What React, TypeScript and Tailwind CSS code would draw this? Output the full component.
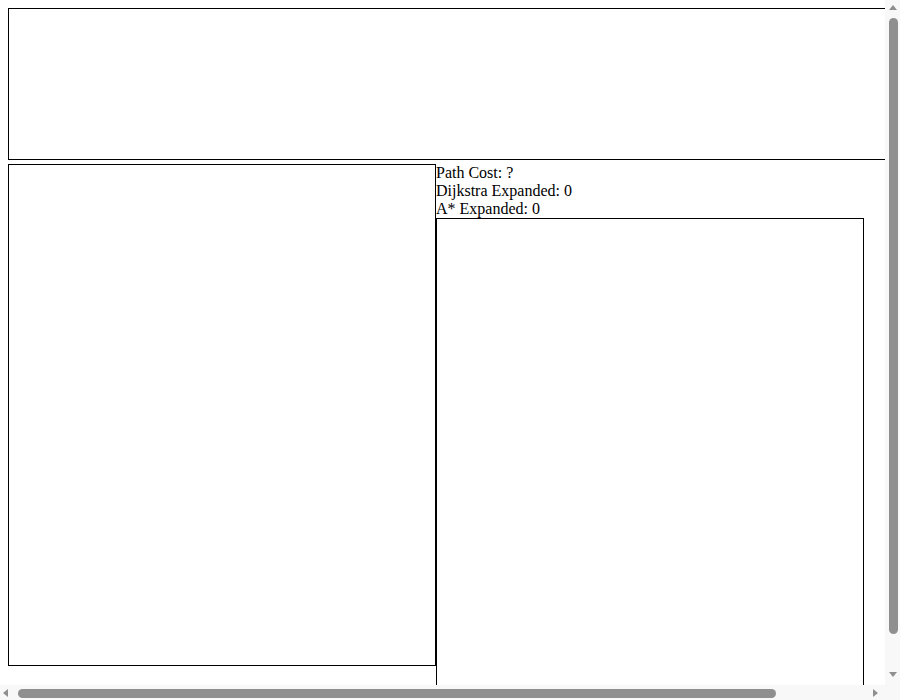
function Arrow({ dir }: { dir: "up" | "down" | "left" | "right" }) {
  const pts: Record<string, string> = {
    up: "0,5 4,0 8,5",
    down: "0,0 8,0 4,5",
    left: "5,0 5,8 0,4",
    right: "0,0 5,4 0,8",
  };
  const vertical = dir === "up" || dir === "down";
  return (
    <svg
      width={vertical ? 8 : 5}
      height={vertical ? 5 : 8}
      viewBox={vertical ? "0 0 8 5" : "0 0 5 8"}
      className="block"
    >
      <polygon points={pts[dir]} fill="#8f8f8f" />
    </svg>
  );
}

export default function App() {
  return (
    <div className="relative w-[900px] h-[700px] overflow-hidden bg-white">
      <div
        className="w-max p-2 pb-3 text-black text-base"
        style={{ fontFamily: '"Liberation Serif", "Times New Roman", serif' }}
      >
        {/* top strip canvas */}
        <div className="w-[1002px] h-[152px] border border-black box-border" />
        <div className="mt-1 flex items-start">
          {/* grid canvas */}
          <div className="w-[428px] h-[502px] border border-black box-border shrink-0" />
          <div className="flex flex-col shrink-0">
            <div className="leading-[18px]">Path Cost: ?</div>
            <div className="leading-[18px]">Dijkstra Expanded: 0</div>
            <div className="leading-[18px]">A* Expanded: 0</div>
            {/* comparison canvas */}
            <div className="w-[428px] h-[502px] border border-black box-border" />
          </div>
        </div>
      </div>

      {/* vertical scrollbar */}
      <div className="absolute right-0 top-0 w-[15px] h-[685px] bg-[#f8f8f8] flex flex-col items-center">
        <div className="pt-[5px] pl-[1px]">
          <Arrow dir="up" />
        </div>
        <div className="mt-[8px] w-[9px] h-[616px] rounded-full bg-[#8f8f8f] ml-[1px]" />
        <div className="mt-auto mb-[8px] pl-[1px]">
          <Arrow dir="down" />
        </div>
      </div>

      {/* horizontal scrollbar */}
      <div className="absolute left-0 bottom-0 w-[885px] h-[15px] bg-[#f8f8f8] flex items-center">
        <div className="pl-[3px] pt-[1px]">
          <Arrow dir="left" />
        </div>
        <div className="ml-[10px] w-[758px] h-[9px] rounded-full bg-[#8f8f8f] mt-[1px]" />
        <div className="ml-auto mr-[7px] pt-[1px]">
          <Arrow dir="right" />
        </div>
      </div>

      {/* scrollbar corner */}
      <div className="absolute right-0 bottom-0 w-[15px] h-[15px] bg-[#f8f8f8]" />
    </div>
  );
}
